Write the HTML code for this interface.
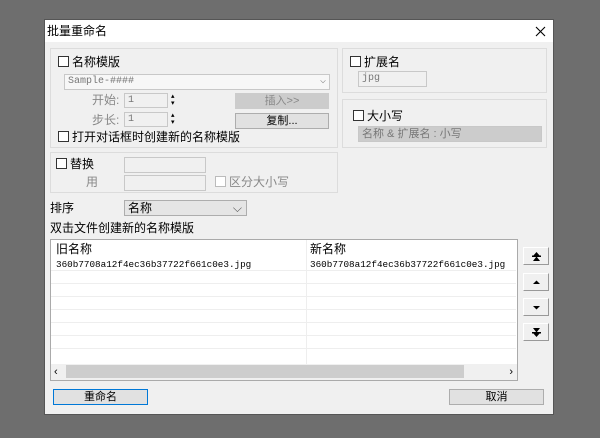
<!DOCTYPE html>
<html><head><meta charset="utf-8"><style>
*{box-sizing:border-box;margin:0;padding:0}
body{width:600px;height:438px;background:#6e6e6e;font-family:"Liberation Sans","Noto Sans CJK SC",sans-serif;font-size:12px;line-height:14px;color:#000;position:relative;overflow:hidden}
.a{position:absolute}
span.a{line-height:14px;white-space:nowrap}
#dlg{left:44px;top:19px;width:510px;height:396px;background:#f0f0f0;border:1px solid #555}
#tb{left:0;top:0;width:508px;height:22px;background:#fff}
.grp{border:1px solid #dcdcdc}
.cb{width:11px;height:11px;border:1px solid #333;background:#fff}
.cbd{border-color:#bbb}
.in{border:1px solid #c8c8c8;background:#f0f0f0;color:#777;font-family:"Liberation Mono","Noto Sans CJK SC",monospace;font-size:10px;padding-left:3px;line-height:14px;white-space:nowrap;overflow:hidden}
.btn{border:1px solid #adadad;background:#e1e1e1;text-align:center;font-size:11px;line-height:14px}
.g{color:#888}
.sb{width:26px;height:18px;border:1px solid #999;border-top-color:#fff;border-left-color:#fff;background:#f0f0f0}
.sb svg{position:absolute;left:8px;top:4px}
.row{position:absolute;left:0;width:465px;height:1px;background:#eee}
.m{font-family:"Liberation Mono",monospace;font-size:9.3px}
</style></head><body>
<div id="dlg" class="a">
<div id="tb" class="a"><span class="a" style="left:2px;top:4px;font-size:12px">批量重命名</span>
<svg class="a" style="left:490px;top:6px" width="11" height="11"><path d="M1 1L10 10M10 1L1 10" stroke="#000" stroke-width="1.1"/></svg></div>
</div>
<div class="a grp" style="left:50px;top:48px;width:288px;height:100px"></div>
<div class="a cb" style="left:58px;top:56px"></div><span class="a" style="left:72px;top:55px">名称模版</span>
<div class="a in" style="left:64px;top:74px;width:266px;height:16px;background:#f7f7f7">Sample-####<span class="a g" style="right:3px;top:0">⌵</span></div>
<span class="a g" style="left:92px;top:93px">开始:</span>
<div class="a in" style="left:124px;top:93px;width:44px;height:15px">1</div>
<span class="a" style="left:171px;top:93px;font-size:7px;line-height:7px">▴<br>▾</span>
<span class="a g" style="left:92px;top:113px">步长:</span>
<div class="a in" style="left:124px;top:112px;width:44px;height:15px">1</div>
<span class="a" style="left:171px;top:112px;font-size:7px;line-height:7px">▴<br>▾</span>
<div class="a btn g" style="left:235px;top:93px;width:94px;height:16px;background:#ccc;border-color:#ccc">插入&gt;&gt;</div>
<div class="a btn" style="left:235px;top:113px;width:94px;height:16px">复制...</div>
<div class="a cb" style="left:58px;top:131px"></div><span class="a" style="left:72px;top:130px">打开对话框时创建新的名称模版</span>
<div class="a grp" style="left:50px;top:152px;width:288px;height:41px"></div>
<div class="a cb" style="left:56px;top:158px"></div><span class="a" style="left:70px;top:157px">替换</span>
<span class="a g" style="left:86px;top:175px">用</span>
<div class="a in" style="left:124px;top:157px;width:82px;height:16px"></div>
<div class="a in" style="left:124px;top:175px;width:82px;height:16px"></div>
<div class="a cb cbd" style="left:215px;top:176px"></div><span class="a g" style="left:229px;top:175px">区分大小写</span>
<div class="a grp" style="left:342px;top:48px;width:205px;height:45px"></div>
<div class="a cb" style="left:350px;top:56px"></div><span class="a" style="left:364px;top:55px">扩展名</span>
<div class="a in" style="left:358px;top:71px;width:69px;height:16px">jpg</div>
<div class="a grp" style="left:342px;top:99px;width:205px;height:49px"></div>
<div class="a cb" style="left:353px;top:110px"></div><span class="a" style="left:367px;top:109px">大小写</span>
<div class="a in" style="left:358px;top:126px;width:184px;height:16px;background:#ccc;font-family:'Liberation Sans','Noto Sans CJK SC',sans-serif;font-size:11px">名称 &amp; 扩展名 : 小写</div>
<span class="a" style="left:50px;top:201px">排序</span>
<div class="a in" style="left:124px;top:200px;width:123px;height:16px;color:#000;background:#e5e5e5;border-color:#adadad;font-family:'Liberation Sans','Noto Sans CJK SC',sans-serif;font-size:12px">名称<span class="a" style="right:4px;top:0;color:#555">⌵</span></div>
<span class="a" style="left:50px;top:221px">双击文件创建新的名称模版</span>
<div class="a" style="left:50px;top:239px;width:468px;height:142px;background:#fff;border:1px solid #aaa;overflow:hidden">
<span class="a" style="left:5px;top:2px">旧名称</span><span class="a" style="left:259px;top:2px">新名称</span>
<div class="a" style="left:255px;top:0;width:1px;height:125px;background:#eee"></div>
<span class="a m" style="left:5px;top:18px">360b7708a12f4ec36b37722f661c0e3.jpg</span>
<span class="a m" style="left:259px;top:18px">360b7708a12f4ec36b37722f661c0e3.jpg</span>
<div class="row" style="top:30px"></div><div class="row" style="top:43px"></div><div class="row" style="top:56px"></div><div class="row" style="top:69px"></div><div class="row" style="top:82px"></div><div class="row" style="top:95px"></div><div class="row" style="top:108px"></div>
<div class="a" style="left:0;top:124px;width:466px;height:16px;background:#f0f0f0"><div class="a" style="left:15px;top:1px;width:398px;height:13px;background:#cdcdcd"></div><span class="a" style="left:3px;top:1px;font-size:11px">‹</span><span class="a" style="right:4px;top:1px;font-size:11px">›</span></div>
</div>
<div class="a sb" style="left:523px;top:247px"><svg width="9" height="9"><path d="M0 3.5H9V5H0z" fill="#000"/><path d="M1 9L4.5 4.5L8 9z" fill="#000"/><path d="M1 4L4.5 0L8 4z" fill="#000"/></svg></div>
<div class="a sb" style="left:523px;top:273px"><svg width="9" height="9"><path d="M1 6L4.5 2.5L8 6z" fill="#000"/></svg></div>
<div class="a sb" style="left:523px;top:298px"><svg width="9" height="9"><path d="M1 3L4.5 6.5L8 3z" fill="#000"/></svg></div>
<div class="a sb" style="left:523px;top:323px"><svg width="9" height="9"><path d="M0 4H9V5.5H0z" fill="#000"/><path d="M1 0L4.5 4.5L8 0z" fill="#000"/><path d="M1 5L4.5 9L8 5z" fill="#000"/></svg></div>
<div class="a btn" style="left:53px;top:389px;width:95px;height:16px;border-color:#0078d7">重命名</div>
<div class="a btn" style="left:449px;top:389px;width:95px;height:16px">取消</div>
</body></html>
